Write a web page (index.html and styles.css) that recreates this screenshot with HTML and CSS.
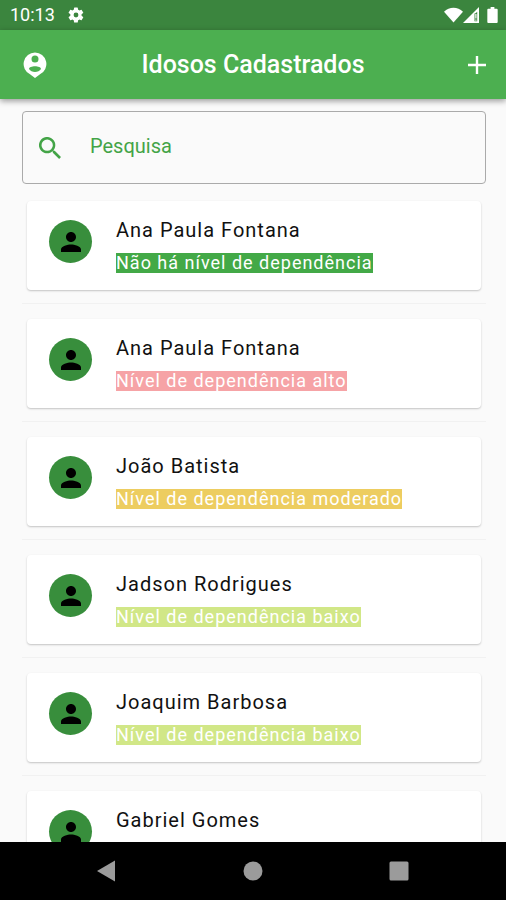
FILE: index.html
```html
<!DOCTYPE html>
<html lang="pt-BR">
<head>
<meta charset="utf-8">
<meta name="viewport" content="width=device-width, initial-scale=1">
<title>Idosos Cadastrados</title>
<link rel="stylesheet" href="styles.css">
</head>
<body>
<svg class="sprite" aria-hidden="true">
  <symbol id="person" viewBox="0 0 24 24"><path d="M12 12c2.200 0 4-1.800 4-4s-1.800-4-4-4-4 1.800-4 4 1.800 4 4 4zm0 2c-2.700 0-8 1.300-8 4v2h16v-2c0-2.700-5.300-4-8-4z"/></symbol>
</svg>
<div class="status-bar">
  <span class="clock">10:13</span>
  <svg class="gear" viewBox="0 0 24 24" aria-hidden="true"><path d="M19.400 13a7.500 7.500 0 0 0 0-2l2.100-1.600a.5.5 0 0 0 .1-.7l-2-3.400a.5.500 0 0 0-.6-.2l-2.500 1a7.300 7.300 0 0 0-1.700-1l-.4-2.600a.5.500 0 0 0-.5-.5h-4a.5.500 0 0 0-.5.5L9 5.100a7.300 7.300 0 0 0-1.700 1l-2.500-1a.5.500 0 0 0-.6.200l-2 3.400a.5.500 0 0 0 .1.700L4.500 11a7.500 7.500 0 0 0 0 2l-2.200 1.600a.5.500 0 0 0-.1.700l2 3.400c.1.200.4.300.6.200l2.500-1a7.300 7.300 0 0 0 1.700 1l.4 2.600c0 .3.200.5.500.5h4c.3 0 .5-.2.500-.5l.4-2.600a7.300 7.300 0 0 0 1.700-1l2.500 1c.2.100.5 0 .6-.2l2-3.400a.5.500 0 0 0-.1-.7zM12 15.200a3.200 3.200 0 1 1 0-6.400 3.200 3.200 0 0 1 0 6.400z"/></svg>
  <div class="signals">
    <svg class="wifi" viewBox="0 0 20 16" aria-hidden="true"><path d="M0 4.500C5.500-1 14.500-1 20 4.500L10 16z"/></svg>
    <svg class="cell" viewBox="0 0 16 16" aria-hidden="true"><path fill-rule="evenodd" d="M16 0v16H0zM11.500 6.500v7.700h2.700V4.800l-1.500 1.500z"/><path d="M12.300 7h1.200v4.500h-1.200zm0 5.500h1.200v1.200h-1.200z"/></svg>
    <svg class="battery" viewBox="0 0 11 17" aria-hidden="true"><path d="M3.500 0h4v1.800H10a1 1 0 0 1 1 1V16a1 1 0 0 1-1 1H1a1 1 0 0 1-1-1V2.800a1 1 0 0 1 1-1h2.500z"/></svg>
  </div>
</div>
<header class="app-bar">
  <button class="icon-button" type="button" aria-label="Perfil">
    <svg class="pin" viewBox="0 0 24 26" aria-hidden="true"><path fill-rule="evenodd" d="M12 .5a11.500 11.500 0 0 1 5 21.800L12 26l-5-3.700A11.500 11.500 0 0 1 12 .5zm0 3a3.500 3.500 0 1 0 0 7 3.500 3.500 0 0 0 0-7zm0 10.800c-3 0-6 1-6 2.800 1.300 2 3.500 3 6 3s4.700-1 6-3c0-1.800-3-2.800-6-2.800z"/></svg>
  </button>
  <h1 class="title">Idosos Cadastrados</h1>
  <button class="icon-button" type="button" aria-label="Adicionar">
    <svg class="plus" viewBox="0 0 18 18" aria-hidden="true"><path d="M7.800 0h2.400v7.800H18v2.400h-7.800V18H7.800v-7.800H0V7.800h7.800z"/></svg>
  </button>
</header>
<main class="content">
  <label class="search">
    <svg class="search-icon" viewBox="3 3 17.500 17.500" aria-hidden="true"><path d="M15.500 14h-.8l-.3-.3A6.500 6.500 0 1 0 13.700 14.400l.3.300v.8l5 5 1.500-1.500zm-6 0a4.500 4.500 0 1 1 0-9 4.500 4.500 0 0 1 0 9z"/></svg>
    <input class="search-input" type="text" placeholder="Pesquisa" aria-label="Pesquisa">
  </label>
  <ul class="people">
    <li class="item"><article class="card"><span class="avatar"><svg aria-hidden="true"><use href="#person"/></svg></span><div class="info"><h2 class="name">Ana Paula Fontana</h2><span class="level none">Não há nível de dependência</span></div></article></li>
    <li class="item"><article class="card"><span class="avatar"><svg aria-hidden="true"><use href="#person"/></svg></span><div class="info"><h2 class="name">Ana Paula Fontana</h2><span class="level high">Nível de dependência alto</span></div></article></li>
    <li class="item"><article class="card"><span class="avatar"><svg aria-hidden="true"><use href="#person"/></svg></span><div class="info"><h2 class="name">João Batista</h2><span class="level moderate">Nível de dependência moderado</span></div></article></li>
    <li class="item"><article class="card"><span class="avatar"><svg aria-hidden="true"><use href="#person"/></svg></span><div class="info"><h2 class="name">Jadson Rodrigues</h2><span class="level low">Nível de dependência baixo</span></div></article></li>
    <li class="item"><article class="card"><span class="avatar"><svg aria-hidden="true"><use href="#person"/></svg></span><div class="info"><h2 class="name">Joaquim Barbosa</h2><span class="level low">Nível de dependência baixo</span></div></article></li>
    <li class="item"><article class="card"><span class="avatar"><svg aria-hidden="true"><use href="#person"/></svg></span><div class="info"><h2 class="name">Gabriel Gomes</h2></div></article></li>
  </ul>
</main>
<nav class="nav-bar" aria-label="Sistema">
  <button class="nav-button" type="button" aria-label="Voltar"><svg viewBox="0 0 20 22" aria-hidden="true"><path d="M18 .5v21L0 11z"/></svg></button>
  <button class="nav-button" type="button" aria-label="Início"><svg viewBox="0 0 20 22" aria-hidden="true"><circle cx="10" cy="11" r="9.500"/></svg></button>
  <button class="nav-button" type="button" aria-label="Recentes"><svg viewBox="0 0 20 22" aria-hidden="true"><rect x=".5" y="1.500" width="19" height="19" rx="1.500"/></svg></button>
</nav>
</body>
</html>
```
FILE: styles.css
```css
* {
  box-sizing: border-box;
}

body {
  display: flex;
  flex-direction: column;
  height: 100vh;
  margin: 0;
  overflow: hidden;
  background: #fafafa;
  color: #111;
  font-family: Roboto, "Liberation Sans", sans-serif;
}

button {
  display: flex;
  align-items: center;
  justify-content: center;
  padding: 0;
  border: 0;
  background: none;
  color: inherit;
}

svg {
  display: block;
  fill: currentColor;
}

.sprite {
  position: absolute;
  width: 0;
  height: 0;
}

.status-bar {
  display: flex;
  flex: none;
  align-items: center;
  height: 30px;
  padding: 0 8px 0 10px;
  background: #3b853e;
  color: #fff;
}

.clock {
  font-size: 18px;
  line-height: 30px;
}

.gear {
  width: 18px;
  height: 18px;
  margin-left: 12px;
}

.signals {
  display: flex;
  align-items: center;
  margin-left: auto;
}

.wifi {
  width: 19px;
  height: 16px;
}

.cell {
  width: 16px;
  height: 16px;
}

.battery {
  width: 11px;
  height: 16px;
  margin-left: 8px;
}

.app-bar {
  z-index: 1;
  display: flex;
  flex: none;
  align-items: center;
  height: 69px;
  padding: 0 5px 0 11px;
  background: #4caf50;
  box-shadow: 0 2px 6px rgba(0, 0, 0, 0.4);
  color: #fff;
}

.icon-button {
  width: 48px;
  height: 48px;
}

.pin {
  width: 24px;
  height: 26px;
}

.plus {
  width: 18px;
  height: 18px;
}

.title {
  flex: 1;
  margin: 0 6px 0 0;
  font-size: 25px;
  font-weight: 500;
  line-height: 32px;
  text-align: center;
}

.content {
  flex: 1;
  min-height: 0;
  padding: 12px 20px 0 22px;
  overflow-y: auto;
  scrollbar-width: none;
}

.search {
  display: flex;
  align-items: center;
  gap: 29px;
  height: 73px;
  padding: 0 16px;
  border: 1px solid #aaa;
  border-radius: 4px;
  color: #43a447;
}

.search-icon {
  flex: none;
  width: 22px;
  height: 22px;
}

.search-input {
  flex: 1;
  min-width: 0;
  height: 40px;
  padding: 0 0 4px;
  border: 0;
  outline: 0;
  background: none;
  color: inherit;
  font: 20px/24px Roboto, "Liberation Sans", sans-serif;
}

.search-input::placeholder {
  color: inherit;
  opacity: 1;
}

.people {
  margin: 2px 0 0;
  padding: 0;
  list-style: none;
}

.item {
  padding: 15px 5px 13px;
  border-bottom: 1px solid #f1f1f1;
}

.card {
  display: flex;
  align-items: flex-start;
  gap: 24px;
  min-height: 89px;
  padding: 17px 22px;
  border-radius: 4px;
  background: #fff;
  box-shadow: 0 1px 2px rgba(0, 0, 0, 0.22);
}

.avatar {
  display: flex;
  flex: none;
  align-items: center;
  justify-content: center;
  width: 43px;
  height: 43px;
  margin-top: 2px;
  border-radius: 50%;
  background: #388e3c;
  color: #000;
}

.avatar svg {
  width: 30px;
  height: 30px;
}

.info {
  display: flex;
  flex-direction: column;
  align-items: flex-start;
  gap: 11px;
}

.name {
  margin: 0;
  font-size: 20px;
  font-weight: 400;
  line-height: 24px;
  letter-spacing: 1px;
}

.level {
  color: #fff;
  font-size: 18px;
  line-height: 20px;
  letter-spacing: 1px;
}

.none {
  background: #43a947;
}

.high {
  background: #f6a3a6;
}

.moderate {
  background: #edcd60;
}

.low {
  background: #d1e787;
}

.nav-bar {
  display: flex;
  flex: none;
  align-items: center;
  justify-content: space-between;
  height: 58px;
  padding: 0 83px;
  background: #000;
  color: #9b9b9b;
}

.nav-button {
  width: 48px;
  height: 48px;
}

.nav-button svg {
  width: 20px;
  height: 22px;
}
```
